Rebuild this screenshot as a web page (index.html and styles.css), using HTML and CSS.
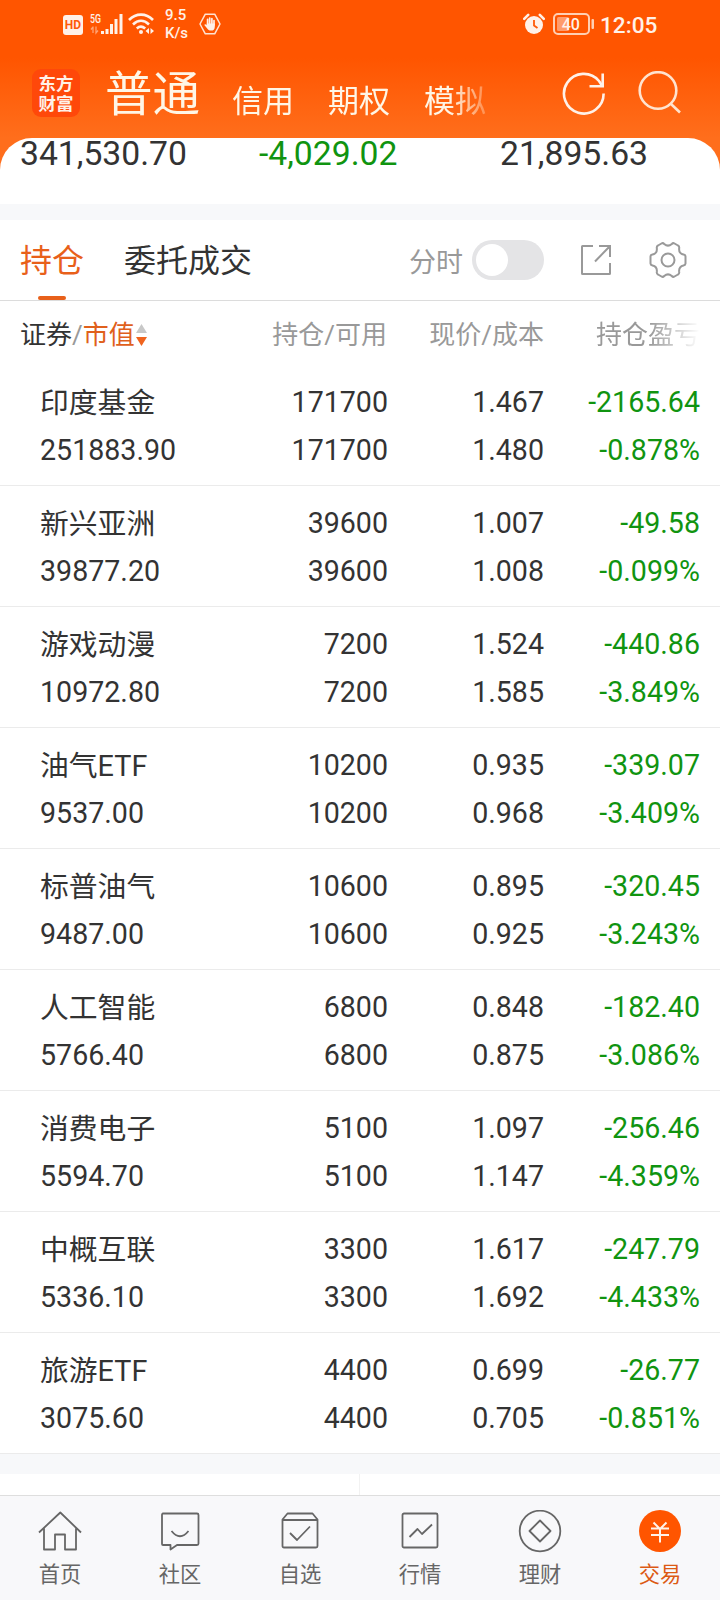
FILE: index.html
```html
<!DOCTYPE html>
<html lang="zh-CN">
<head>
  <meta charset="UTF-8">
  <meta name="viewport" content="width=device-width, initial-scale=1.0">
  <title>交易 - 持仓</title>
  <link rel="stylesheet" href="styles.css">
</head>
<body>

  <div class="app">
    <!-- Header -->
    <header class="header">
      <div class="status-bar">
        <svg class="hd" width="20" height="20" viewBox="0 0 20 20">
          <rect width="20" height="20" rx="3" fill="#fff1e8"/>
          <text x="10" y="14.2" text-anchor="middle" class="hd-text">HD</text>
        </svg>
        <svg class="signal" width="34" height="24" viewBox="0 0 34 24">
          <text x="0" y="11" class="net-text" textLength="11" lengthAdjust="spacingAndGlyphs">5G</text>
          <path d="M3 21v-6.500M1 17.500l2-2.500M6 14.500v6.500l2-2.500" fill="none" stroke="#ffa374" stroke-width="1.300"/>
          <path d="M12.500 19v3M17 17v5M21.500 12v10M26 7v15M31 2v20" stroke="#fff1e8" stroke-width="3" stroke-linecap="butt"/>
        </svg>
        <svg class="wifi" width="27" height="24" viewBox="0 0 27 24" fill="none" stroke="#fff1e8" stroke-width="2.600">
          <path d="M1 8C8 .8 18 .8 25 8M5 12.500c5-4.800 11-4.800 16 0M8.800 16.500c2.500-2.300 5.800-2.300 8.400 0"/>
          <circle cx="13" cy="20" r="2" fill="#fff1e8" stroke="none"/>
          <path d="M21 16v6l-3.500-3zM22.500 16v6l3.500-3z" fill="#fff1e8" stroke="none"/>
        </svg>
        <div class="speed"><span>9.5</span><span>K/s</span></div>
        <svg class="hand" width="22" height="22" viewBox="0 0 22 22">
          <path d="M6.300 1.200h9.400L21 11l-5.300 9.800H6.300L1 11z" fill="none" stroke="#ffe3d2" stroke-width="1.500" stroke-linejoin="round"/>
          <path d="M8.600 12V6.300M10.700 11V5M12.900 11V5.600M15 12V7.500" stroke="#fff1e8" stroke-width="1.700" stroke-linecap="round"/>
          <path d="M7.800 10.500h8v3.200c0 2.500-1.500 3.900-3.700 3.900-2 0-3.100-.9-4.100-2.400L5.300 12c.5-1.300 1.600-.8 2.500.3z" fill="#fff1e8"/>
        </svg>
        <svg class="alarm" width="22" height="22" viewBox="0 0 22 22">
          <circle cx="11" cy="12" r="9" fill="#fff1e8"/>
          <path d="M1.200 5.800l4-4M20.800 5.800l-4-4" stroke="#fff1e8" stroke-width="2.600" stroke-linecap="round"/>
          <path d="M11 7v5.500l3.500 2.500" fill="none" stroke="#ff5a08" stroke-width="1.800"/>
        </svg>
        <svg class="battery" width="42" height="22" viewBox="0 0 42 22">
          <rect x="1" y="1" width="35" height="20" rx="4" fill="none" stroke="#ffcfb3" stroke-width="2"/>
          <rect x="4" y="4" width="12" height="14" rx="1.500" fill="#ff9c6b"/>
          <rect x="38.500" y="6" width="2.500" height="10" rx="1" fill="#ffcfb3"/>
          <text x="17.800" y="16.800" text-anchor="middle" class="battery-text">40</text>
        </svg>
        <span class="clock">12:05</span>
      </div>

      <div class="title-bar">
        <div class="logo"><span>东方</span><span>财富</span></div>
        <nav class="account-tabs">
          <a class="account active">普通</a>
          <a class="account">信用</a>
          <a class="account">期权</a>
          <a class="account">模拟</a>
        </nav>
        <svg class="refresh" width="44" height="44" viewBox="0 0 44 44" fill="none" stroke="#fff1e8" stroke-width="2.600">
          <path d="M41.600 22.500A19.800 19.800 0 1 1 37 10l3 4.500"/>
          <path d="M27.500 15.200H40.700V2.500"/>
        </svg>
        <svg class="search" width="44" height="44" viewBox="0 0 44 44" fill="none" stroke="#ffe3cf" stroke-width="2.600">
          <circle cx="20" cy="19.500" r="18.300"/>
          <path d="M33 33l9 8.500"/>
        </svg>
      </div>
    </header>

    <!-- Account totals, scrolled under the header -->
    <section class="summary">
      <span>341,530.70</span>
      <span class="down">-4,029.02</span>
      <span>21,895.63</span>
    </section>

    <!-- Holdings -->
    <section class="holdings">
      <div class="tabs">
        <a class="tab active">持仓</a>
        <a class="tab">委托成交</a>
        <span class="switch-label">分时</span>
        <span class="switch"></span>
        <svg class="share" width="32" height="32" viewBox="0 0 32 32" fill="none" stroke="#999" stroke-width="2">
          <path d="M13 2H2.500Q2 2 2 2.500V29.500Q2 30 2.500 30H29.500Q30 30 30 29.500V19M19 2H30V13M30 2L15 17.500"/>
        </svg>
        <svg class="settings" width="38" height="38" viewBox="0 0 38 38" fill="none" stroke="#999" stroke-width="2" stroke-linejoin="round">
          <path d="M12.500 2.500Q14 1.600 15.200 3Q19 6.200 22.800 3Q24 1.600 25.500 2.500L29 4.500Q30.500 5.300 30.200 7Q29.500 12.500 34.500 13.600Q36.500 14 36.500 15.500V22.500Q36.500 24 34.500 24.400Q29.500 25.500 30.200 31Q30.500 32.700 29 33.500L25.500 35.500Q24 36.400 22.800 35Q19 31.800 15.200 35Q14 36.400 12.500 35.500L9 33.500Q7.500 32.700 7.800 31Q8.500 25.500 3.500 24.400Q1.500 24 1.500 22.500V15.500Q1.500 14 3.500 13.600Q8.500 12.500 7.800 7Q7.500 5.300 9 4.500Z"/>
          <circle cx="19" cy="19" r="6.500"/>
        </svg>
      </div>

      <div class="columns">
        <div class="sort">
          <span class="dark">证券</span>/<span class="orange">市值</span>
          <svg width="11" height="24" viewBox="0 0 11 24">
            <path d="M0 10L5.500 1 11 10z" fill="#c8c8c8"/>
            <path d="M0 14h11L5.500 23z" fill="#f0641e"/>
          </svg>
        </div>
        <span>持仓/可用</span>
        <span>现价/成本</span>
        <span class="fade">持仓盈亏</span>
      </div>

      <div class="row">
        <div><p class="name">印度基金</p><p>251883.90</p></div>
        <div><p>171700</p><p>171700</p></div>
        <div><p>1.467</p><p>1.480</p></div>
        <div class="down"><p>-2165.64</p><p>-0.878%</p></div>
      </div>
      <div class="row">
        <div><p class="name">新兴亚洲</p><p>39877.20</p></div>
        <div><p>39600</p><p>39600</p></div>
        <div><p>1.007</p><p>1.008</p></div>
        <div class="down"><p>-49.58</p><p>-0.099%</p></div>
      </div>
      <div class="row">
        <div><p class="name">游戏动漫</p><p>10972.80</p></div>
        <div><p>7200</p><p>7200</p></div>
        <div><p>1.524</p><p>1.585</p></div>
        <div class="down"><p>-440.86</p><p>-3.849%</p></div>
      </div>
      <div class="row">
        <div><p class="name">油气ETF</p><p>9537.00</p></div>
        <div><p>10200</p><p>10200</p></div>
        <div><p>0.935</p><p>0.968</p></div>
        <div class="down"><p>-339.07</p><p>-3.409%</p></div>
      </div>
      <div class="row">
        <div><p class="name">标普油气</p><p>9487.00</p></div>
        <div><p>10600</p><p>10600</p></div>
        <div><p>0.895</p><p>0.925</p></div>
        <div class="down"><p>-320.45</p><p>-3.243%</p></div>
      </div>
      <div class="row">
        <div><p class="name">人工智能</p><p>5766.40</p></div>
        <div><p>6800</p><p>6800</p></div>
        <div><p>0.848</p><p>0.875</p></div>
        <div class="down"><p>-182.40</p><p>-3.086%</p></div>
      </div>
      <div class="row">
        <div><p class="name">消费电子</p><p>5594.70</p></div>
        <div><p>5100</p><p>5100</p></div>
        <div><p>1.097</p><p>1.147</p></div>
        <div class="down"><p>-256.46</p><p>-4.359%</p></div>
      </div>
      <div class="row">
        <div><p class="name">中概互联</p><p>5336.10</p></div>
        <div><p>3300</p><p>3300</p></div>
        <div><p>1.617</p><p>1.692</p></div>
        <div class="down"><p>-247.79</p><p>-4.433%</p></div>
      </div>
      <div class="row">
        <div><p class="name">旅游ETF</p><p>3075.60</p></div>
        <div><p>4400</p><p>4400</p></div>
        <div><p>0.699</p><p>0.705</p></div>
        <div class="down"><p>-26.77</p><p>-0.851%</p></div>
      </div>
    </section>

    <section class="more">
      <div></div>
      <div></div>
    </section>

    <!-- Bottom navigation -->
    <nav class="bottom-nav">
      <a class="nav-item">
        <svg width="44" height="44" viewBox="0 0 44 44">
          <path d="M1 22.500L22.300 2.500 43 22.500M6 18.500V39.500H17V24.500H27V39.500H38V18.500"/>
        </svg>
        <span>首页</span>
      </a>
      <a class="nav-item">
        <svg width="44" height="44" viewBox="0 0 44 44">
          <path d="M5 3.500H39Q40.500 3.500 40.500 5V33.500Q40.500 35 39 35H19L12.500 39.500V35H5Q4 35 4 34V5Q4 3.500 5 3.500ZM13.500 21Q22 31.500 30.500 21"/>
        </svg>
        <span>社区</span>
      </a>
      <a class="nav-item">
        <svg width="44" height="44" viewBox="0 0 44 44">
          <path d="M4.500 9.500L9.500 3.500H34.500L39.500 9.500V36Q39.500 37.500 38 37.500H6Q4.500 37.500 4.500 36ZM4.500 10H39.500M12 23L19 30 32 16.500"/>
        </svg>
        <span>自选</span>
      </a>
      <a class="nav-item">
        <svg width="44" height="44" viewBox="0 0 44 44">
          <rect x="4.500" y="3.500" width="35" height="34" rx="1.500"/>
          <path d="M11.500 27L19.500 19 24 24 34 14.500"/>
        </svg>
        <span>行情</span>
      </a>
      <a class="nav-item">
        <svg width="44" height="44" viewBox="0 0 44 44">
          <circle cx="22" cy="21" r="20.300"/>
          <path d="M22 10.500L32.500 21 22 31.500 11.500 21Z"/>
        </svg>
        <span>理财</span>
      </a>
      <a class="nav-item active">
        <svg width="44" height="44" viewBox="0 0 44 44">
          <circle class="coin" cx="22" cy="21" r="21"/>
          <path class="yen" d="M15.500 12.500L22 19 28.500 12.500M13 18.500H31M13 25H31M22 19V32.500"/>
        </svg>
        <span>交易</span>
      </a>
    </nav>
  </div>

</body>
</html>
```
FILE: styles.css
```css
* {
  box-sizing: border-box;
}

body {
  margin: 0;
  background-color: #fff;
  color: #333;
  font-family: Roboto, "Noto Sans CJK SC", sans-serif;
}

p {
  margin: 0;
}

svg {
  display: block;
  flex-shrink: 0;
}

.app {
  width: 720px;
  height: 1600px;
  display: flex;
  flex-direction: column;
  overflow: hidden;
}

.down {
  color: #109410;
}

/* Header */
.header {
  height: 170px;
  flex-shrink: 0;
  background: linear-gradient(#ff5500 0, #ff5500 58px, #ff6e1c 138px);
}

.status-bar {
  display: flex;
  align-items: flex-start;
  height: 48px;
  padding: 13px 0 0 63px;
  color: #fff1e8;
}

.hd {
  margin-top: 2px;
}

.hd-text {
  font-size: 12px;
  font-weight: 700;
  fill: #ff5a08;
}

.signal {
  margin-left: 7px;
  margin-top: -1px;
}

.net-text {
  font-size: 13px;
  font-weight: 500;
  fill: #fff1e8;
}

.wifi {
  margin-left: 4px;
  margin-top: -1px;
}

.speed {
  display: flex;
  flex-direction: column;
  margin: -7px 0 0 10px;
  width: 34px;
  font-size: 15px;
  line-height: 18px;
  font-weight: 500;
}

.alarm {
  margin-left: 302px;
}

.battery {
  margin-left: 8px;
}

.battery-text {
  font-size: 16px;
  font-weight: 500;
  fill: #fff1e8;
}

.clock {
  margin: 0 0 0 5px;
  font-size: 22.6px;
  line-height: 26px;
  font-weight: 500;
}

.title-bar {
  display: flex;
  height: 90px;
  padding-left: 32px;
}

.logo {
  display: flex;
  flex-direction: column;
  align-items: center;
  width: 48px;
  height: 48px;
  margin-top: 21px;
  padding-top: 4px;
  border-radius: 9px;
  background-color: #ff480a;
  color: #fff1e8;
  font-family: "Noto Sans CJK SC", sans-serif;
  font-size: 17.5px;
  line-height: 20px;
  font-weight: 700;
}

.account-tabs {
  display: flex;
  align-items: flex-start;
  gap: 34px;
  width: 415px;
  margin-left: 25px;
  color: #fff6e6;
  -webkit-mask-image: linear-gradient(90deg, #000 345px, transparent 395px);
  mask-image: linear-gradient(90deg, #000 345px, transparent 395px);
}

.account {
  padding-top: 8px;
  font-size: 31px;
  line-height: 92px;
}

.account.active {
  margin-right: -2px;
  padding-top: 1px;
  font-size: 47.5px;
}

.refresh {
  margin: 23px 0 0 42px;
}

.search {
  margin: 23px 0 0 32px;
}

/* Totals */
.summary {
  display: grid;
  grid-template-columns: 239px 241px 1fr;
  height: 66px;
  margin-top: -32px;
  flex-shrink: 0;
  padding-left: 20px;
  border-radius: 32px 32px 0 0;
  background-color: #fff;
  font-size: 33.7px;
  line-height: 32px;
}

/* Holdings */
.holdings {
  flex-shrink: 0;
  border-top: 16px solid #f7f8fa;
}

.tabs {
  display: flex;
  align-items: center;
  height: 81px;
  padding-left: 20px;
  border-bottom: 1px solid #dcdcdc;
}

.tab {
  position: relative;
  height: 80px;
  margin-right: 40px;
  font-size: 32px;
  line-height: 83px;
}

.tab.active {
  color: #e8601a;
}

.tab.active::after {
  content: "";
  position: absolute;
  left: 18px;
  bottom: 0;
  width: 28px;
  height: 4px;
  border-radius: 2px;
  background-color: #e8601a;
}

.switch-label {
  margin-left: auto;
  color: #999;
  font-size: 27px;
}

.switch {
  width: 72px;
  height: 40px;
  margin-left: 9px;
  padding: 4px;
  border-radius: 20px;
  background-color: #e4e4e6;
}

.switch::before {
  content: "";
  display: block;
  width: 32px;
  height: 32px;
  border-radius: 50%;
  background-color: #fff;
}

.share {
  margin-left: 36px;
}

.settings {
  margin: 0 33px 0 37px;
}

.columns,
.row {
  display: grid;
  grid-template-columns: 200px 148px 156px 156px;
  padding: 0 20px 0 40px;
  text-align: right;
}

.columns {
  grid-template-columns: 220px 147px 157px 156px;
  height: 64px;
  padding-left: 20px;
  color: #999;
  font-size: 26px;
  line-height: 68px;
}

.sort {
  display: flex;
  align-items: center;
}

.sort svg {
  margin-left: 1px;
}

.dark {
  color: #333;
}

.orange {
  color: #e0601c;
}

.fade {
  -webkit-mask-image: linear-gradient(90deg, #000 105px, transparent 100%);
  mask-image: linear-gradient(90deg, #000 105px, transparent 100%);
}

.row {
  height: 121px;
  padding-top: 13px;
  border-bottom: 1px solid #ebebeb;
  font-size: 28.6px;
  line-height: 48px;
}

.row div:first-child {
  text-align: left;
}

.name {
  height: 48px;
  font-size: 28.8px;
  line-height: 50px;
}

.more {
  display: flex;
  flex: 1;
  border-top: 20px solid #f7f8fa;
}

.more div {
  width: 360px;
}

.more div:first-child {
  border-right: 1px solid #f2f2f2;
}

/* Bottom navigation */
.bottom-nav {
  display: flex;
  height: 105px;
  flex-shrink: 0;
  border-top: 1px solid #dedede;
  background-color: #f8f8fa;
}

.nav-item {
  display: flex;
  flex: 1;
  flex-direction: column;
  align-items: center;
  padding-top: 14px;
  color: #666;
  font-size: 21.3px;
  line-height: 32px;
}

.nav-item svg {
  fill: none;
  stroke: #666;
  stroke-width: 1.8;
  stroke-linejoin: round;
}

.nav-item span {
  margin-top: 5px;
}

.nav-item.active {
  color: #dc5a14;
}

.nav-item .coin {
  fill: #ff5500;
  stroke: none;
}

.nav-item .yen {
  stroke: #fff1e8;
  stroke-width: 2;
}
```
